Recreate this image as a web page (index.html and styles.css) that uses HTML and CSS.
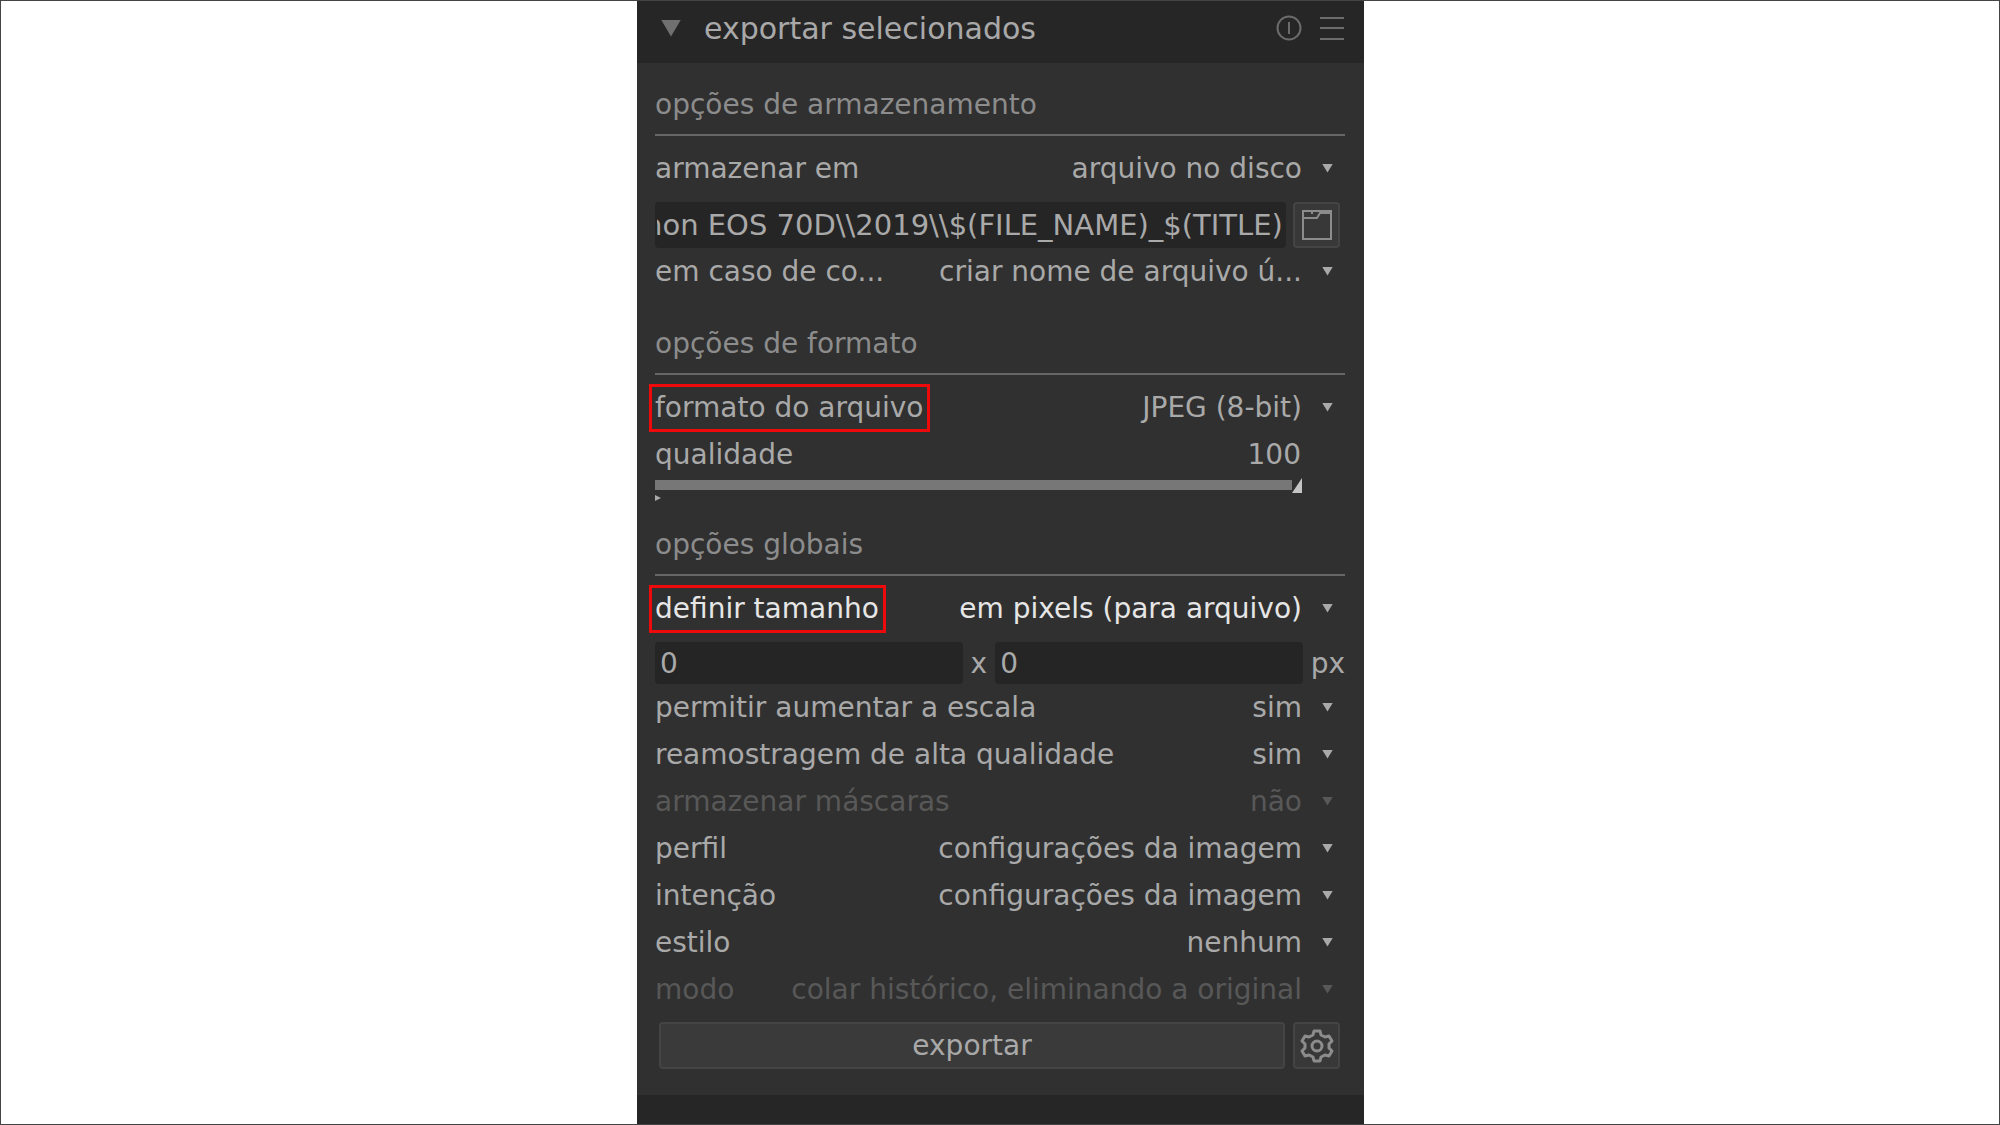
FILE: index.html
```
<!DOCTYPE html>
<html lang="pt-br">
<head>
  <meta charset="UTF-8">
  <meta name="viewport" content="width=device-width, initial-scale=1.0">
  <title>exportar selecionados</title>
  <link rel="stylesheet" href="styles.css">
</head>
<body>

<main class="panel">
  <header class="panel-header">
    <button class="toggle" type="button" aria-label="recolher"></button>
    <h1>exportar selecionados</h1>
    <button class="header-icon" type="button" aria-label="redefinir">
      <svg width="26" height="26" viewBox="0 0 26 26" fill="none" stroke="currentColor" stroke-width="2">
        <circle cx="13" cy="13" r="11.5"/>
        <path d="M13 7v12"/>
      </svg>
    </button>
    <button class="header-icon" type="button" aria-label="predefinições">
      <svg width="24" height="26" viewBox="0 0 24 26" fill="none" stroke="currentColor" stroke-width="2">
        <path d="M0 3h24M0 13h24M0 24h24"/>
      </svg>
    </button>
  </header>

  <form class="panel-body">
    <section>
      <h2>opções de armazenamento</h2>
      <div class="row">
        <label for="storage">armazenar em</label>
        <div class="combo"><select id="storage"><option>arquivo no disco</option></select></div>
      </div>
      <div class="path-row">
        <input class="field" id="path" type="text" aria-label="caminho do arquivo" value="Canon EOS 70D\\2019\\$(FILE_NAME)_$(TITLE)">
        <button class="icon-button" type="button" aria-label="selecionar diretório">
          <svg width="30" height="30" viewBox="0 0 30 30" fill="none" stroke="currentColor" stroke-width="2">
            <path d="M1 1h28v28H1zM1 8h14l3-5h11M10 1v3"/>
          </svg>
        </button>
      </div>
      <div class="row">
        <label for="conflict">em caso de co...</label>
        <div class="combo"><select id="conflict"><option>criar nome de arquivo ú...</option></select></div>
      </div>
    </section>

    <section>
      <h2>opções de formato</h2>
      <div class="row">
        <label class="marked" for="format">formato do arquivo</label>
        <div class="combo"><select id="format"><option>JPEG (8-bit)</option></select></div>
      </div>
      <div class="row">
        <label for="quality">qualidade</label>
        <output class="quality-value" for="quality">100</output>
      </div>
      <div class="slider">
        <input id="quality" type="range" min="5" max="100" value="100">
      </div>
    </section>

    <section>
      <h2>opções globais</h2>
      <div class="row active">
        <label class="marked" for="size">definir tamanho</label>
        <div class="combo"><select id="size"><option>em pixels (para arquivo)</option></select></div>
      </div>
      <div class="size-row">
        <input class="field" type="text" aria-label="largura" value="0">
        <span>x</span>
        <input class="field" type="text" aria-label="altura" value="0">
        <span class="unit">px</span>
      </div>
      <div class="row">
        <label for="upscale">permitir aumentar a escala</label>
        <div class="combo"><select id="upscale"><option>sim</option></select></div>
      </div>
      <div class="row">
        <label for="resample">reamostragem de alta qualidade</label>
        <div class="combo"><select id="resample"><option>sim</option></select></div>
      </div>
      <div class="row disabled">
        <label for="masks">armazenar máscaras</label>
        <div class="combo"><select id="masks" disabled><option>não</option></select></div>
      </div>
      <div class="row">
        <label for="profile">perfil</label>
        <div class="combo"><select id="profile"><option>configurações da imagem</option></select></div>
      </div>
      <div class="row">
        <label for="intent">intenção</label>
        <div class="combo"><select id="intent"><option>configurações da imagem</option></select></div>
      </div>
      <div class="row">
        <label for="style">estilo</label>
        <div class="combo"><select id="style"><option>nenhum</option></select></div>
      </div>
      <div class="row disabled">
        <label for="mode">modo</label>
        <div class="combo"><select id="mode" disabled><option>colar histórico, eliminando a original</option></select></div>
      </div>
    </section>

    <div class="actions">
      <button class="export" type="button">exportar</button>
      <button class="icon-button" type="button" aria-label="configurações">
        <svg width="34" height="34" viewBox="0 0 34 34" fill="none" stroke="currentColor" stroke-width="3" stroke-linejoin="round">
          <path d="M14 2h6l1 4 4 2 4-1 3 5-3 3v4l3 3-3 5-4-1-4 2-1 4h-6l-1-4-4-2-4 1-3-5 3-3v-4l-3-3 3-5 4 1 4-2z"/>
          <circle cx="17" cy="17" r="5"/>
        </svg>
      </button>
    </div>
  </form>
</main>

<script>
  // mostra o final do caminho
  const path = document.getElementById('path');
  path.scrollLeft = path.scrollWidth;
</script>

</body>
</html>
```
FILE: styles.css
```
* {
  box-sizing: border-box;
}

body {
  margin: 0;
  min-height: 100vh;
  display: grid;
  grid-template-columns: minmax(0, 636fr) minmax(0, 727fr) minmax(0, 635fr);
  background-color: #fff;
  border: 1px solid #444;
  font-family: 'DejaVu Sans', sans-serif;
  font-size: 28px;
  color: #a9a9a9;
}

button, input, select {
  font: inherit;
  color: inherit;
  margin: 0;
  padding: 0;
  border: none;
  background: none;
}

/* Painel */
.panel {
  grid-column: 2;
  background-color: #262626;
}

.panel-header {
  display: flex;
  align-items: center;
  gap: 18px;
  height: 62px;
  padding: 0 20px 8px 24px;
}

.panel-header h1 {
  flex: 1;
  margin: 0 0 0 5px;
  font-size: 30px;
  font-weight: normal;
  white-space: nowrap;
}

.toggle {
  width: 20px;
  height: 17px;
  background-color: #707070;
  clip-path: polygon(0 0, 100% 0, 50% 100%);
}

.header-icon {
  display: flex;
  color: #6c6c6c;
}

.panel-body {
  padding: 0 19px 26px 18px;
  background-color: #303030;
}

/* Seções */
section {
  padding-top: 18px;
}

section + section {
  padding-top: 25px;
}

h2 {
  margin: 0 0 9px;
  padding-bottom: 6px;
  border-bottom: 2px solid #666;
  font-size: 28px;
  font-weight: normal;
  line-height: 47px;
  color: #8c8c8c;
}

.row {
  display: flex;
  align-items: center;
  height: 47px;
  white-space: nowrap;
}

.active {
  color: #e6e6e6;
}

.disabled {
  color: #585858;
}

/* Destaque em vermelho */
.marked {
  margin-left: -6px;
  padding: 0 4px 0 3px;
  border: 3px solid #ee0a0a;
  line-height: 42px;
}

.combo {
  position: relative;
  flex: 1;
  min-width: 0;
}

.combo select {
  appearance: none;
  width: 100%;
  height: 46px;
  padding-right: 43px;
  text-align-last: right;
  opacity: 1;
}

.combo::after {
  content: '';
  position: absolute;
  top: 18px;
  right: 12px;
  width: 11px;
  height: 9px;
  background-color: #a9a9a9;
  clip-path: polygon(0 0, 100% 0, 50% 100%);
  pointer-events: none;
}

.disabled .combo::after {
  background-color: #585858;
}

/* Campos de texto */
.field {
  flex: 1;
  min-width: 0;
  height: 42px;
  padding: 0 5px;
  border-radius: 4px;
  background-color: #252525;
}

.path-row {
  display: flex;
  gap: 7px;
  padding: 10px 5px 0 0;
}

.path-row .field {
  height: 46px;
  padding: 0 3px 0 2px;
  font-size: 29px;
}

.size-row {
  display: flex;
  align-items: center;
  gap: 8px;
  padding-top: 10px;
}

.icon-button {
  display: flex;
  align-items: center;
  justify-content: center;
  width: 47px;
  height: 46px;
  border: 2px solid #444;
  border-radius: 4px;
  background-color: #383838;
  color: #8c8c8c;
}

/* Controle de qualidade */
.quality-value {
  margin-left: auto;
  padding-right: 44px;
}

.slider {
  position: relative;
  height: 18px;
  padding-right: 43px;
}

.slider input {
  appearance: none;
  display: block;
  width: 100%;
  height: 15px;
  background: linear-gradient(#777, #777) 0 2px / calc(100% - 10px) 10px no-repeat;
}

.slider input::-webkit-slider-thumb {
  appearance: none;
  width: 10px;
  height: 15px;
  background-color: #c4c4c4;
  clip-path: polygon(100% 0, 100% 100%, 0 100%);
}

.slider::after {
  content: '';
  position: absolute;
  left: 0;
  top: 17px;
  width: 6px;
  height: 6px;
  background-color: #a9a9a9;
  clip-path: polygon(0 0, 100% 50%, 0 100%);
}

/* Botões */
.actions {
  display: flex;
  gap: 8px;
  padding: 9px 5px 0 4px;
}

.export {
  flex: 1;
  height: 47px;
  border: 2px solid #444;
  border-radius: 4px;
  background-color: #3a3a3a;
}

.actions .icon-button {
  height: 47px;
}
```
